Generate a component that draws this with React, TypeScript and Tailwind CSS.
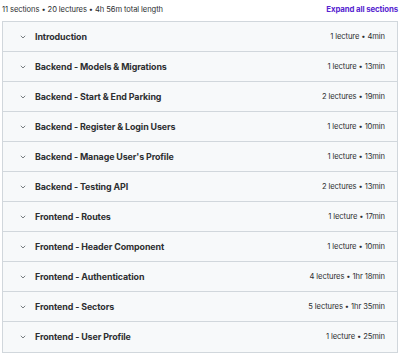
import React from "react";

const sections: [string, string][] = [
  ["Introduction", "1 lecture • 4min"],
  ["Backend - Models & Migrations", "1 lecture • 13min"],
  ["Backend - Start & End Parking", "2 lectures • 19min"],
  ["Backend - Register & Login Users", "1 lecture • 10min"],
  ["Backend - Manage User's Profile", "1 lecture • 13min"],
  ["Backend - Testing API", "2 lectures • 13min"],
  ["Frontend - Routes", "1 lecture • 17min"],
  ["Frontend - Header Component", "1 lecture • 10min"],
  ["Frontend - Authentication", "4 lectures • 1hr 18min"],
  ["Frontend - Sectors", "5 lectures • 1hr 35min"],
  ["Frontend - User Profile", "1 lecture • 25min"],
];

function Chevron() {
  return (
    <svg width="6" height="4" viewBox="0 0 6 4" fill="none">
      <path d="M0.8 0.8 L3 3 L5.2 0.8" stroke="#6a6f73" strokeWidth="0.9" />
    </svg>
  );
}

export default function App() {
  return (
    <div
      className="w-[400px] h-[353px] bg-white overflow-hidden"
      style={{ fontFamily: "Inter, 'Noto Sans', sans-serif" }}
    >
      <div className="flex items-center justify-between h-[21px] pl-[2px] pr-[2px] pb-[2px]">
        <span className="text-[7.6px] text-[#2d2f31] tracking-[-0.1px]">
          11 sections • 20 lectures • 4h 56m total length
        </span>
        <span className="text-[7.8px] font-bold text-[#5624d0] tracking-[-0.1px]">
          Expand all sections
        </span>
      </div>
      <div className="mx-[2px] w-[396px] border border-[#d1d7dc]">
        {sections.map(([t, m], i) => (
          <div
            key={i}
            className={`flex items-center h-[30px] bg-[#f7f9fa] pl-[17px] pr-[12px] ${
              i < sections.length - 1 ? "border-b border-[#d1d7dc]" : ""
            }`}
          >
            <Chevron />
            <span className="ml-[9px] text-[8.9px] font-bold text-[#2d2f31] tracking-[-0.1px]">
              {t}
            </span>
            <span className="ml-auto text-[7.6px] text-[#2d2f31] tracking-[-0.1px]">{m}</span>
          </div>
        ))}
      </div>
    </div>
  );
}
